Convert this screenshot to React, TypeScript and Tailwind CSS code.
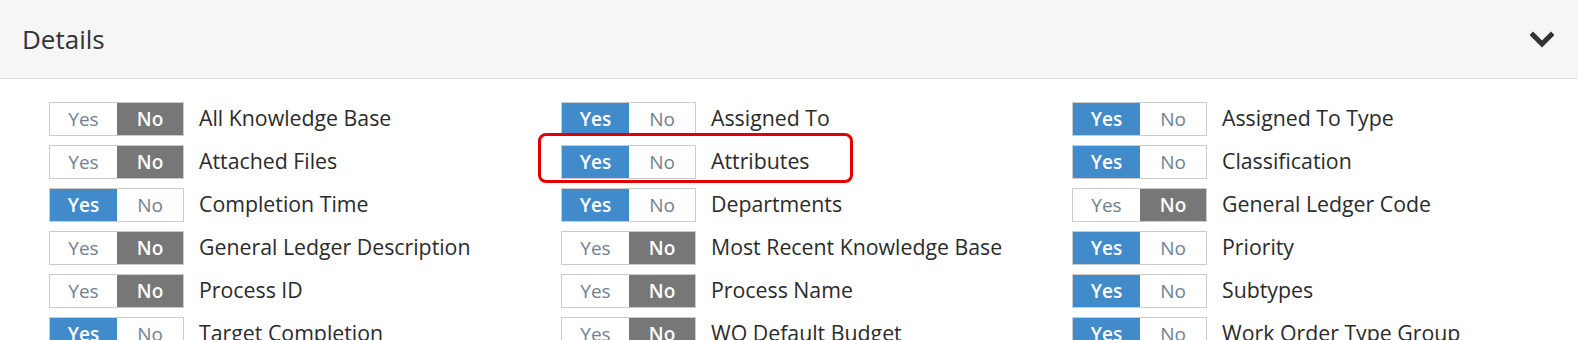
import React from 'react';

type Field = { label: string; on: boolean; flagged?: boolean };

const columns: Field[][] = [
  [
    { label: 'All Knowledge Base', on: false },
    { label: 'Attached Files', on: false },
    { label: 'Completion Time', on: true },
    { label: 'General Ledger Description', on: false },
    { label: 'Process ID', on: false },
    { label: 'Target Completion', on: true },
  ],
  [
    { label: 'Assigned To', on: true },
    { label: 'Attributes', on: true, flagged: true },
    { label: 'Departments', on: true },
    { label: 'Most Recent Knowledge Base', on: false },
    { label: 'Process Name', on: false },
    { label: 'WO Default Budget', on: false },
  ],
  [
    { label: 'Assigned To Type', on: true },
    { label: 'Classification', on: true },
    { label: 'General Ledger Code', on: false },
    { label: 'Priority', on: true },
    { label: 'Subtypes', on: true },
    { label: 'Work Order Type Group', on: true },
  ],
];

function YesNo({ on }: { on: boolean }) {
  return (
    <div className="flex h-[34px] w-[135px] shrink-0 border border-[#cccccc] text-[19px] leading-none">
      <span
        className={`flex w-[67px] items-center justify-center ${
          on ? 'bg-[#428bca] font-semibold text-white' : 'bg-white text-[#718192]'
        }`}
      >
        Yes
      </span>
      <span
        className={`flex flex-1 items-center justify-center ${
          on ? 'bg-white text-[#718192]' : 'bg-[#777777] font-semibold text-white'
        }`}
      >
        No
      </span>
    </div>
  );
}

function FieldRow({ field }: { field: Field }) {
  return (
    <div className="relative flex h-[34px] items-center gap-[15px]">
      <YesNo on={field.on} />
      <span className="pb-[2px] text-[21.3px] text-[#2b2b2b] whitespace-nowrap">{field.label}</span>
      {field.flagged && (
        <span className="pointer-events-none absolute left-[-23px] top-[-12px] h-[50px] w-[315px] rounded-[8px] border-[3px] border-[#e00000]" />
      )}
    </div>
  );
}

export default function App() {
  return (
    <div className="h-[340px] w-[1578px] overflow-hidden bg-white" style={{ fontFamily: '"Open Sans", "Noto Sans", sans-serif' }}>
      <div className="flex h-[79px] items-center justify-between border-b border-[#dddddd] bg-[#f6f6f6] pl-[22px] pr-[24px]">
        <span className="text-[26px] text-[#333333]">Details</span>
        <svg width="24" height="17" viewBox="0 0 24 17" className="text-[#333333]">
          <polyline points="3,4 12,13 21,4" fill="none" stroke="currentColor" strokeWidth="5" strokeLinecap="square" />
        </svg>
      </div>
      <div className="grid grid-cols-[512px_511px_511px] pl-[49px] pt-[23px]">
        {columns.map((col, i) => (
          <div key={i} className="flex flex-col gap-[9px]">
            {col.map((f) => (
              <FieldRow key={f.label} field={f} />
            ))}
          </div>
        ))}
      </div>
    </div>
  );
}
